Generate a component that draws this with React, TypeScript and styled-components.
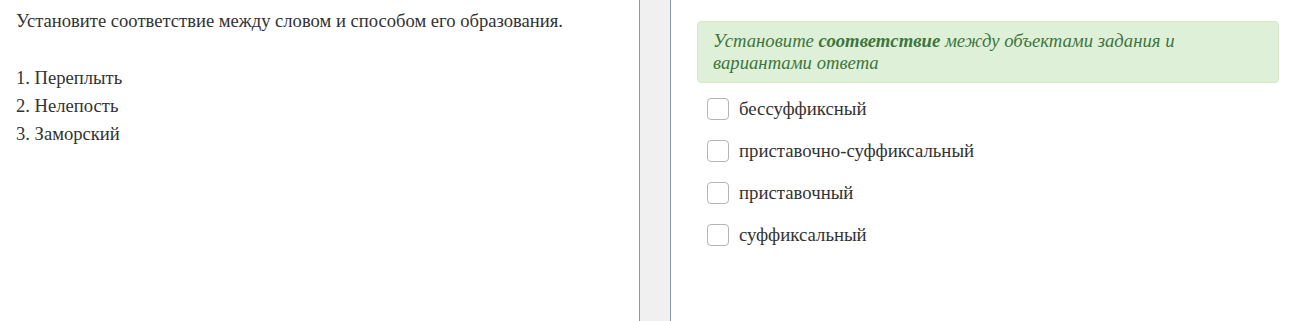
import React from "react";
import styled, { createGlobalStyle } from "styled-components";

const GlobalStyle = createGlobalStyle`
  html, body {
    margin: 0;
    padding: 0;
    background: #ffffff;
  }
  body {
    font-family: "Liberation Serif", "Times New Roman", serif;
    color: #333333;
  }
`;

const words = ["Переплыть", "Нелепость", "Заморский"];
const options = [
  "бессуффиксный",
  "приставочно-суффиксальный",
  "приставочный",
  "суффиксальный",
];

export default function App() {
  return (
    <>
      <GlobalStyle />
      <Layout>
        <TaskPanel>
          <Question>Установите соответствие между словом и способом его образования.</Question>
          <WordList>
            {words.map((w, i) => (
              <Word key={w}>
                {i + 1}. {w}
              </Word>
            ))}
          </WordList>
        </TaskPanel>
        <Splitter />
        <AnswerPanel>
          <Hint>
            Установите <b>соответствие</b> между объектами задания и вариантами ответа
          </Hint>
          <Options>
            {options.map((o) => (
              <Option key={o}>
                <CheckBox type="checkbox" />
                <OptionText>{o}</OptionText>
              </Option>
            ))}
          </Options>
        </AnswerPanel>
      </Layout>
    </>
  );
}

const Layout = styled.div`
  display: flex;
  width: 1291px;
  height: 321px;
  overflow: hidden;
`;

const TaskPanel = styled.div`
  width: 639px;
  flex-shrink: 0;
  padding: 10px 16px;
  box-sizing: border-box;
`;

const Question = styled.p`
  margin: 0;
  font-size: 18.6px;
  line-height: 22px;
`;

const WordList = styled.div`
  margin-top: 32px;
  display: flex;
  flex-direction: column;
`;

const Word = styled.div`
  font-size: 18.6px;
  line-height: 28px;
`;

const Splitter = styled.div`
  width: 30px;
  flex-shrink: 0;
  background: #f0f0f0;
  border-left: 1px solid #8a96b4;
  border-right: 1px solid #8a96b4;
`;

const AnswerPanel = styled.div`
  flex: 1;
  padding: 21px 12px 0 26px;
  box-sizing: border-box;
`;

const Hint = styled.div`
  background: #dff0d8;
  border: 1px solid #d6e9c6;
  border-radius: 4px;
  color: #3c763d;
  font-style: italic;
  font-size: 18.7px;
  line-height: 22px;
  padding: 8px 15px;

  b {
    font-weight: bold;
  }
`;

const Options = styled.div`
  display: flex;
  flex-direction: column;
  gap: 20px;
  margin-top: 15px;
  padding-left: 10px;
`;

const Option = styled.label`
  display: flex;
  align-items: center;
  gap: 10px;
  height: 22px;
`;

const CheckBox = styled.input`
  appearance: none;
  width: 22px;
  height: 22px;
  margin: 0;
  border: 1px solid #b5b5b5;
  border-radius: 4px;
  background: #fff;
  box-sizing: border-box;
`;

const OptionText = styled.span`
  font-size: 18.8px;
  line-height: 22px;
`;
